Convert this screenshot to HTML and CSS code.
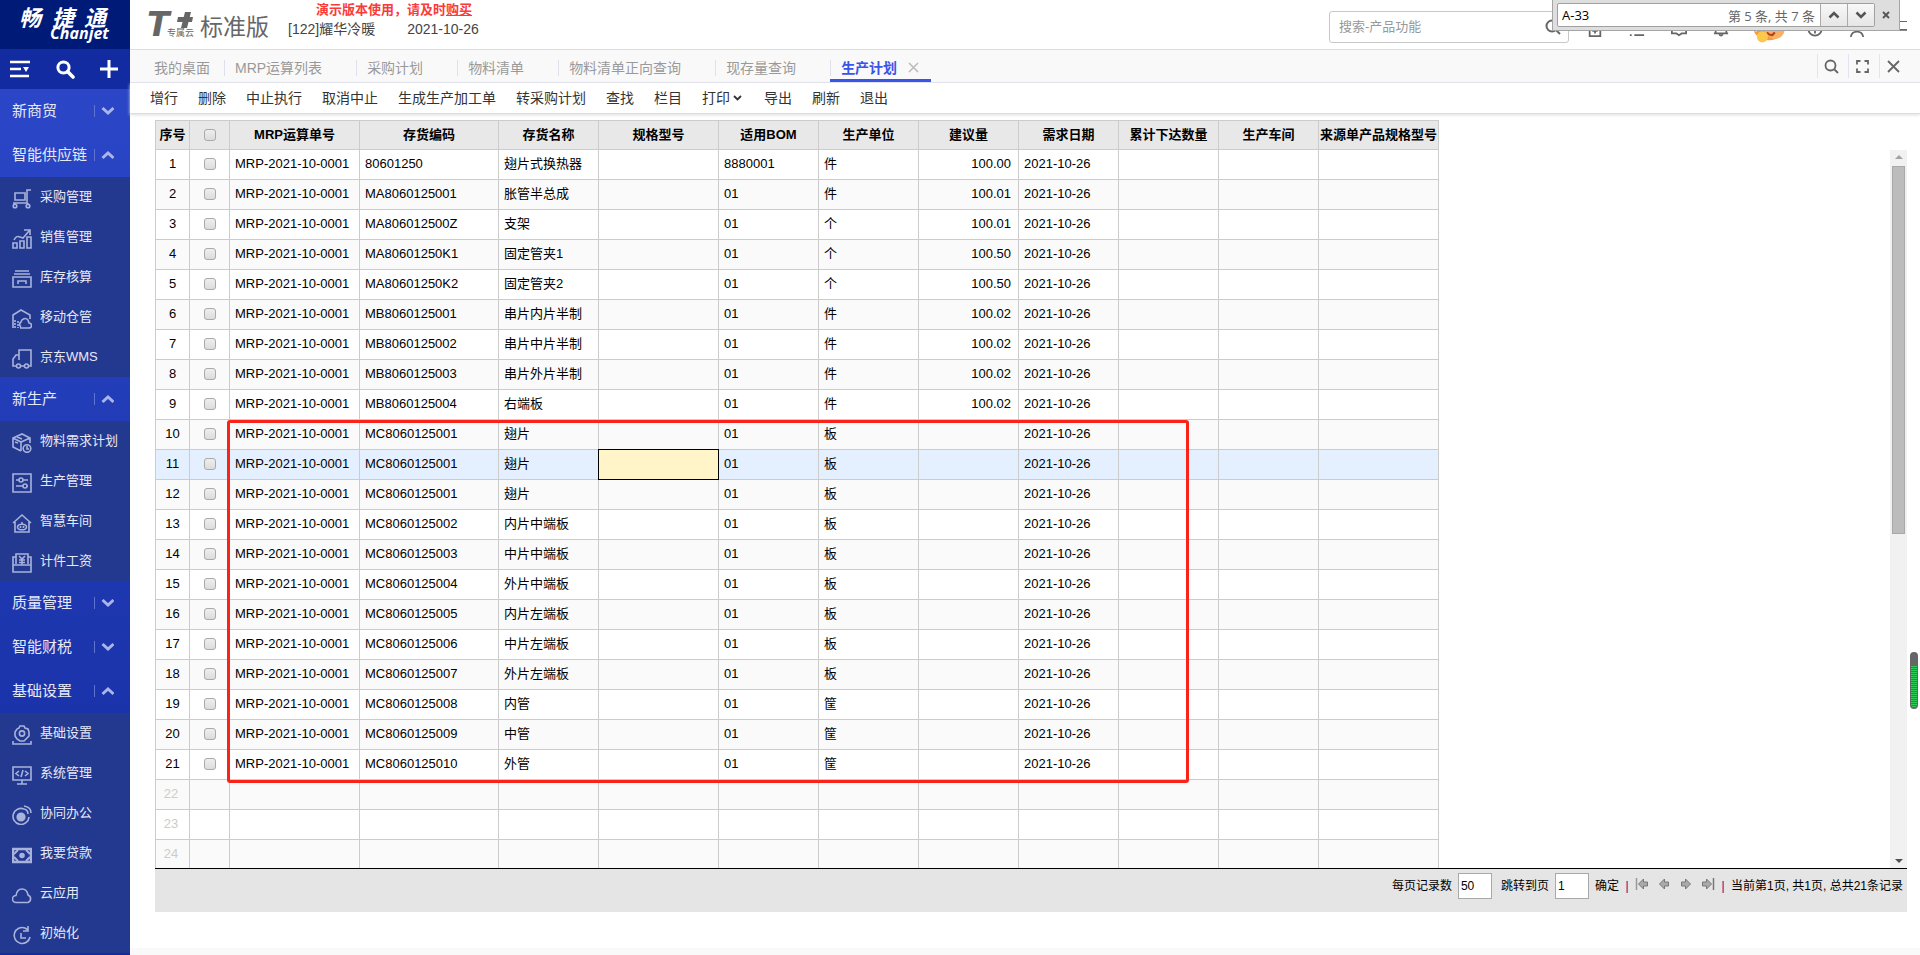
FILE: index.html
```html
<!DOCTYPE html>
<html lang="zh-CN">
<head>
<meta charset="utf-8">
<title>生产计划</title>
<link rel="stylesheet" href="styles.css">
</head>
<body>
<aside class="sidebar">
  <div class="brand">
    <svg class="brand-logo" width="130" height="49" viewBox="0 0 130 49" role="img" aria-label="畅捷通 Chanjet">
      <text class="brand-cn" x="19 52 84" y="26">畅捷通</text>
      <text class="brand-en" x="50" y="39">Chanjet</text>
    </svg>
  </div>
  <div class="quick">
    <button type="button" aria-label="菜单"><svg width="20" height="18" viewBox="0 0 20 18"><path d="M0 2h20M0 9h11M0 16h19" stroke="#fff" stroke-width="2.6" fill="none"/><path d="M13 7h6l-3 5z" fill="#fff"/></svg></button>
    <button type="button" aria-label="搜索"><svg width="19" height="19" viewBox="0 0 19 19"><circle cx="7.5" cy="7.5" r="5.6" stroke="#fff" stroke-width="3" fill="none"/><path d="M11.5 11.5l5.500 5.500" stroke="#fff" stroke-width="3.6" stroke-linecap="round"/></svg></button>
    <button type="button" aria-label="新增"><svg width="18" height="18" viewBox="0 0 18 18"><path d="M9 0v18M0 9h18" stroke="#fff" stroke-width="3"/></svg></button>
  </div>
  <nav class="menu">
    <button type="button" class="group">新商贸<svg class="chev" viewBox="0 0 20 12"><path d="M.5 0v12" class="bar"/><path d="M8.500 3l5.500 5 5.500-5"/></svg></button>
    <button type="button" class="group">智能供应链<svg class="chev" viewBox="0 0 20 12"><path d="M.5 0v12" class="bar"/><path d="M8.500 9l5.500-5 5.500 5"/></svg></button>
    <ul class="items">
      <li><a href="#"><svg viewBox="0 0 20 20"><path d="M3 4h10v7H3zM1 14h14V1h4M2 14l1 2M15 14l2 2"/><circle cx="3" cy="17" r="1.800"/><circle cx="16" cy="17" r="1.800"/></svg>采购管理</a></li>
      <li><a href="#"><svg viewBox="0 0 20 20"><path d="M1 14h4v5H1zM8 12h4v7H8zM15 8h4v11h-4zM2 11c2-4 4-4 6-3l3 1 6-7M12 1h6v5"/></svg>销售管理</a></li>
      <li><a href="#"><svg viewBox="0 0 20 20"><path d="M3 2h14M2 5h16M1 8h18v10H1zM6 15v-3h8v3"/></svg>库存核算</a></li>
      <li><a href="#"><svg viewBox="0 0 20 20"><path d="M1 19V6l8-5 9 5v4M9 18a3 3 0 0 1 0-5 4 4 0 0 1 7-2l1 3a2 2 0 0 1 0 5H8"/><path d="M3 11v8M6 12v7" stroke-dasharray="2 1"/></svg>移动仓管</a></li>
      <li><a href="#"><svg viewBox="0 0 20 20"><path d="M4 17H1v-7l3-4h3v5M7 6V1h12v16h-2M9 17h3"/><circle cx="6.500" cy="17" r="2"/><circle cx="14.500" cy="17" r="2"/></svg>京东WMS</a></li>
    </ul>
    <button type="button" class="group">新生产<svg class="chev" viewBox="0 0 20 12"><path d="M.5 0v12" class="bar"/><path d="M8.500 9l5.500-5 5.500 5"/></svg></button>
    <ul class="items">
      <li><a href="#"><svg viewBox="0 0 20 20"><path d="M9 18l-8-4V5l9-4 8 4v5M1 5l8 4 9-4M9 9v9M3 9l3 1M5 4l5 2"/><circle cx="15" cy="15.500" r="3.800"/><path d="M15 13v3h2"/></svg>物料需求计划</a></li>
      <li><a href="#"><svg viewBox="0 0 20 20"><path d="M1 1h18v18H1zM4 7h3M11 7h5M4 13h7M15 13h1"/><circle cx="9" cy="7" r="2"/><circle cx="13" cy="13" r="2"/></svg>生产管理</a></li>
      <li><a href="#"><svg viewBox="0 0 20 20"><path d="M1 10l9-8 9 8M3 9v10h14V9"/><path d="M10 9v2"/><ellipse cx="10" cy="14" rx="4.500" ry="2.800"/><path d="M8.500 13v2M11.500 13v2"/></svg>智慧车间</a></li>
      <li><a href="#"><svg viewBox="0 0 20 20"><path d="M4 11V1h12v10M4 4H1v15h18V4h-3M1 12h18M7 3l3 3 3-3M10 6v6M7 7h6M7 9.500h6"/></svg>计件工资</a></li>
    </ul>
    <button type="button" class="group">质量管理<svg class="chev" viewBox="0 0 20 12"><path d="M.5 0v12" class="bar"/><path d="M8.500 3l5.500 5 5.500-5"/></svg></button>
    <button type="button" class="group">智能财税<svg class="chev" viewBox="0 0 20 12"><path d="M.5 0v12" class="bar"/><path d="M8.500 3l5.500 5 5.500-5"/></svg></button>
    <button type="button" class="group">基础设置<svg class="chev" viewBox="0 0 20 12"><path d="M.5 0v12" class="bar"/><path d="M8.500 9l5.500-5 5.500 5"/></svg></button>
    <ul class="items">
      <li><a href="#"><svg viewBox="0 0 20 20"><path d="M1 16v3h18v-3M8 1h4l1 2 3 1 1 3v4l-3 3-2 2H8l-3-2-2-3V7l2-3 2-1z"/><circle cx="10" cy="8.500" r="2.600"/></svg>基础设置</a></li>
      <li><a href="#"><svg viewBox="0 0 20 20"><path d="M1 2h18v13H1zM10 15v4M5 19h10M7 6L4 8.500 7 11M13 6l3 2.500-3 2.500M11 5l-2 7"/></svg>系统管理</a></li>
      <li><a href="#"><svg viewBox="0 0 20 20"><path d="M12 4a8 8 0 1 0 5 8M12 1q7 1 7 7M12 4q4 1 4 5"/><circle cx="9" cy="12" r="3.800" fill="#a9b2db"/></svg>协同办公</a></li>
      <li><a href="#"><svg viewBox="0 0 20 20"><path d="M1 4h18v13H1z" stroke-width="2.500"/><path d="M6 5L2 9M14 5l4 4M6 16l-4-4M14 16l4-4" stroke-width="2"/><circle cx="10" cy="10.500" r="2" fill="#a9b2db"/></svg>我要贷款</a></li>
      <li><a href="#"><svg viewBox="0 0 20 20"><path d="M4 17.500a3.500 3.500 0 0 1 0-7Q5 4 10 4t6 6a4 4 0 0 1 0 7.500z"/></svg>云应用</a></li>
      <li><a href="#"><svg viewBox="0 0 20 20"><path d="M16 5L13 3a8 8 0 1 0 5 9M16 1v5h-5M9 8v5h5"/></svg>初始化</a></li>
    </ul>
  </nav>
</aside>

<main class="main">
  <header class="header">
    <svg class="product" width="130" height="40" viewBox="0 0 130 40" role="img" aria-label="T+ 专属云 标准版">
      <text class="product-t" x="3" y="31">T</text>
      <path d="M41 7h6l-4 16h-6zM34 12h15l-1 5H33z"/>
      <text class="product-sub" x="23" y="31">专属云</text>
      <text class="product-name" x="56" y="30">标准版</text>
    </svg>
    <div class="account">
      <p class="trial">演示版本使用，请及时<a href="#">购买</a></p>
      <p class="org"><span>[122]耀华冷暖</span><time datetime="2021-10-26">2021-10-26</time></p>
    </div>
    <div class="search">
      <input type="text" placeholder="搜索-产品功能" aria-label="搜索产品功能">
      <button type="button" aria-label="搜索"><svg width="18" height="18" viewBox="0 0 18 18"><circle cx="8" cy="8" r="5.500"/><path d="M12 12l4 4"/></svg></button>
    </div>
    <div class="actions">
      <button type="button" aria-label="保存"><svg viewBox="0 0 18 18"><path d="M3 3h12v14H3zM9 7v7M6 11h6"/></svg></button>
      <button type="button" aria-label="列表"><svg viewBox="0 0 18 18"><path d="M1 3h2M6 3h11M1 9h2M6 9h11M1 16h2M6 16h11"/></svg></button>
      <button type="button" aria-label="消息"><svg viewBox="0 0 18 18"><path d="M1 2h16v12h-5l-3 2-3-2H1z"/></svg></button>
      <button type="button" aria-label="通知"><svg viewBox="0 0 18 18"><path d="M1 14h16M3 14V7a6 6 0 0 1 12 0v7M7 15q2 3 4 0"/></svg></button>
      <button type="button" class="avatar" aria-label="助手"><svg class="face" viewBox="0 0 34 30"><ellipse cx="18" cy="14" rx="14" ry="11" fill="#f59a3c"/><ellipse cx="23" cy="15" rx="9" ry="9" fill="#f8b064"/><path d="M3 12l3 6 3-2z" fill="#ddd"/><path d="M16 18q4 5 7 0" stroke="#b3431f" stroke-width="2" fill="none"/><circle cx="12" cy="22" r="5" fill="#fbc84b"/></svg></button>
      <button type="button" aria-label="帮助"><svg viewBox="0 0 18 18"><circle cx="9" cy="9" r="7.500"/><path d="M9 11v3M7 6q2-3 4 0l-2 3"/></svg></button>
      <button type="button" aria-label="用户"><svg viewBox="0 0 18 18"><circle cx="9" cy="6" r="4"/><path d="M2 18q1-6 7-6t7 6"/></svg></button>
      <button type="button" aria-label="更多"><svg viewBox="0 0 18 18"><path d="M2 0h16M2 10h16"/></svg></button>
    </div>
  </header>

  <div class="tabbar">
    <nav class="tabs">
      <a href="#" class="tab home">我的桌面</a>
      <a href="#" class="tab">MRP运算列表</a>
      <a href="#" class="tab">采购计划</a>
      <a href="#" class="tab">物料清单</a>
      <a href="#" class="tab">物料清单正向查询</a>
      <a href="#" class="tab">现存量查询</a>
      <a href="#" class="tab active" aria-current="page">生产计划<svg width="11" height="11" viewBox="0 0 11 11"><path d="M1 1l9 9M10 1l-9 9" stroke="#bbb" stroke-width="1.500"/></svg></a>
    </nav>
    <div class="tabtools">
      <button type="button" aria-label="搜索"><svg width="15" height="15" viewBox="0 0 15 15"><circle cx="6.500" cy="6.500" r="5"/><path d="M10.500 10.500l3.500 3.500"/></svg></button>
      <button type="button" aria-label="全屏"><svg width="15" height="15" viewBox="0 0 15 15"><path d="M2 5.500V2h3.500M9.500 2H13v3.500M13 9.500V13H9.500M5.500 13H2V9.500"/></svg></button>
      <button type="button" aria-label="关闭"><svg width="15" height="15" viewBox="0 0 15 15"><path d="M2 2l11 11M13 2L2 13"/></svg></button>
    </div>
  </div>

  <div class="toolbar">
    <button type="button">增行</button><button type="button">删除</button><button type="button">中止执行</button><button type="button">取消中止</button><button type="button">生成生产加工单</button><button type="button">转采购计划</button><button type="button">查找</button><button type="button">栏目</button><button type="button">打印<svg width="14" height="10" viewBox="0 0 14 10"><path d="M4 3l3.500 3.500L11 3" fill="none" stroke="#333" stroke-width="1.800"/></svg></button><button type="button">导出</button><button type="button">刷新</button><button type="button">退出</button>
  </div>

  <section class="content">
    <div class="grid">
      <div class="sheet">
        <table class="plan">
          <colgroup><col class="w-no"><col class="w-check"><col class="w-order"><col class="w-code"><col class="w-std"><col class="w-wide"><col class="w-std"><col class="w-std"><col class="w-std"><col class="w-std"><col class="w-std"><col class="w-std"><col class="w-wide"></colgroup>
          <thead><tr><th>序号</th><th><input type="checkbox" aria-label="全选"></th><th>MRP运算单号</th><th>存货编码</th><th>存货名称</th><th>规格型号</th><th>适用BOM</th><th>生产单位</th><th>建议量</th><th>需求日期</th><th>累计下达数量</th><th>生产车间</th><th>来源单产品规格型号</th></tr></thead>
          <tbody id="rows"></tbody>
        </table>
        <div class="highlight"></div>
      </div>
      <div class="scrollbar" aria-hidden="true"><span class="arrow up"></span><span class="thumb"></span><span class="arrow down"></span></div>
    </div>
    <footer class="pager">
      <label for="size">每页记录数</label><input id="size" type="text" value="50">
      <label for="jump">跳转到页</label><input id="jump" type="text" value="1">
      <button type="button">确定</button><span class="sep">|</span>
      <div class="pages">
        <button type="button" aria-label="首页"><svg viewBox="0 0 14 12"><path d="M1.500 0v12" stroke="#999" stroke-width="1.500"/><path d="M3.500 6l5-5v3h4v4h-4v3z"/></svg></button>
        <button type="button" aria-label="上一页"><svg viewBox="0 0 14 12"><path d="M2.500 6l5-5v3h4v4h-4v3z"/></svg></button>
        <button type="button" aria-label="下一页"><svg viewBox="0 0 14 12"><path d="M11.500 6l-5-5v3h-4v4h4v3z"/></svg></button>
        <button type="button" aria-label="末页"><svg viewBox="0 0 14 12"><path d="M12.500 0v12" stroke="#777" stroke-width="1.500"/><path d="M10.500 6l-5-5v3h-4v4h4v3z"/></svg></button>
      </div>
      <span class="sep">|</span><span class="total">当前第1页, 共1页, 总共21条记录</span>
    </footer>
  </section>
</main>

<form class="findbar">
  <div class="findbox">
    <input type="text" value="A-33" aria-label="在页面中查找">
    <span class="count">第 5 条, 共 7 条</span>
    <button type="button" aria-label="上一个"><svg width="12" height="8" viewBox="0 0 12 8"><path d="M1.500 6.500L6 2l4.500 4.500"/></svg></button>
    <button type="button" aria-label="下一个"><svg width="12" height="8" viewBox="0 0 12 8"><path d="M1.500 1.500L6 6l4.500-4.500"/></svg></button>
  </div>
  <button type="button" class="close" aria-label="关闭"><svg width="8" height="8" viewBox="0 0 8 8"><path d="M1 1l6 6M7 1L1 7"/></svg></button>
</form>
<div class="meter" aria-hidden="true"></div>
<script src="script.js"></script>
</body>
</html>
```
FILE: styles.css
```css
* { box-sizing: border-box; }
body {
  margin: 0;
  height: 100vh;
  display: flex;
  overflow: hidden;
  background: #fff;
  color: #000;
  font: 13px/20px "Liberation Sans", "Noto Sans CJK SC", sans-serif;
}
button, input { font: inherit; color: inherit; margin: 0; }
button { padding: 0; border: 0; background: none; }
a { color: inherit; text-decoration: none; }
p, ul { margin: 0; padding: 0; list-style: none; }
svg { display: block; flex: none; }

/* Sidebar */
.sidebar {
  width: 130px;
  flex: none;
  overflow: hidden;
  color: #e6e9f7;
  background: linear-gradient(#2d49cb, #142c9f);
}
.brand { height: 49px; background: #001a78; }
.brand-cn { font: italic bold 22px "Noto Sans CJK SC", sans-serif; fill: #fff; }
.brand-en { font: italic bold 16px "Open Sans", sans-serif; fill: #fff; }
.quick {
  height: 40px;
  padding: 0 12px 0 10px;
  display: flex;
  align-items: center;
  justify-content: space-between;
  background: #132ba0;
}
.group {
  width: 100%;
  height: 44px;
  padding: 0 16px 0 12px;
  display: flex;
  align-items: center;
  justify-content: space-between;
  font-size: 15px;
}
.chev { width: 20px; height: 12px; fill: none; stroke: #aab5e8; stroke-width: 3; }
.chev .bar { stroke: #5f74d2; stroke-width: 1; }
.items { background: #23388f; }
.items a {
  height: 40px;
  padding: 0 12px;
  display: flex;
  align-items: center;
  gap: 8px;
  white-space: nowrap;
}
.items svg { width: 20px; height: 20px; margin-top: 3px; fill: none; stroke: #a9b2db; stroke-width: 1.600; }

/* Header */
.main { flex: 1; min-width: 0; display: flex; flex-direction: column; }
.header {
  height: 50px;
  flex: none;
  padding-left: 14px;
  display: flex;
  align-items: center;
  border-bottom: 1px solid #ddd;
}
.product { fill: #666; }
.product-t { font: italic bold 33px "DejaVu Sans", sans-serif; }
.product-sub { font: 9px "Noto Sans CJK SC", sans-serif; }
.product-name { font: 23px "Noto Sans CJK SC", sans-serif; }
.account { flex: 1; padding-left: 14px; align-self: flex-start; white-space: nowrap; }
.trial { padding-left: 28px; color: #fb3a3a; font-weight: bold; }
.trial a { text-decoration: underline; }
.org { display: flex; gap: 32px; font-size: 14px; line-height: 18px; color: #444; }
.search {
  width: 240px;
  height: 32px;
  margin: 4px 5px 0 0;
  display: flex;
  align-items: center;
  border: 1px solid #c8c8c8;
  border-radius: 3px;
}
.search input { flex: 1; min-width: 0; border: 0; padding: 0 9px; background: none; outline: 0; }
.search input::placeholder { color: #999; opacity: 1; }
.search button { width: 24px; }
.search svg, .actions svg { fill: none; stroke: #666; stroke-width: 2; }
.actions { display: flex; padding-top: 8px; }
.actions button { width: 42px; display: flex; justify-content: center; align-items: center; }
.actions svg { width: 16px; height: 16px; }
.actions .avatar { width: 52px; }
.actions .face { width: 38px; height: 34px; stroke: none; }

/* Tabs */
.tabbar {
  height: 33px;
  flex: none;
  display: flex;
  justify-content: space-between;
  background: #f9f9f9;
  border-bottom: 1px solid #e2e4ef;
}
.tabs { display: flex; padding-left: 13px; font-size: 14px; color: #999; }
.tab {
  position: relative;
  padding: 3px 34px 0 11px;
  display: flex;
  align-items: center;
  white-space: nowrap;
}
.tab + .tab::before {
  content: "";
  position: absolute;
  left: 0;
  top: 10px;
  height: 16px;
  border-left: 1px solid #dfe0ee;
}
.tab.home { padding-right: 14px; }
.tab.active {
  padding: 6px 12px 0 11px;
  gap: 11px;
  color: #3954e8;
  font-weight: bold;
  border-bottom: 3px solid #3954e8;
}
.tabtools { display: flex; align-items: center; padding-right: 10px; }
.tabtools button {
  width: 31px;
  height: 24px;
  padding-right: 3px;
  display: flex;
  align-items: center;
  justify-content: center;
  border-left: 1px solid #e2e4ef;
}
.tabtools svg { fill: none; stroke: #666; stroke-width: 1.800; }

/* Toolbar */
.toolbar {
  height: 31px;
  flex: none;
  padding-left: 20px;
  display: flex;
  align-items: center;
  gap: 20px;
  font-size: 14px;
  color: #333;
  border-bottom: 1px solid #ddd;
  box-shadow: 0 1px 3px #ddd;
}
.toolbar button { display: flex; align-items: center; white-space: nowrap; }

/* Grid */
.content {
  flex: 1;
  min-height: 0;
  margin-bottom: 7px;
  padding: 6px 13px 36px 25px;
  display: flex;
  flex-direction: column;
  box-shadow: 0 7px #f9f9f9;
}
.grid {
  flex: 1;
  min-height: 0;
  overflow: hidden;
  display: flex;
  justify-content: space-between;
  border-bottom: 1px solid #000;
}
.sheet { position: relative; flex: none; }
.plan { width: 1284px; table-layout: fixed; border-collapse: collapse; }
.w-no { width: 34px; }
.w-check { width: 40px; }
.w-order { width: 130px; }
.w-code { width: 139px; }
.w-std { width: 100px; }
.w-wide { width: 120px; }
.plan th, .plan td { height: 30px; padding: 0 5px 1px; border: 1px solid #ccc; white-space: nowrap; line-height: 18px; }
.plan th { height: 29px; padding: 0 0 1px; background: #e8e8e8; text-align: center; }
.plan tbody tr:nth-child(even) { background: #fafafa; }
.plan tbody tr.current { background: #e4f0ff; }
.plan td:nth-child(-n+2) { text-align: center; }
.plan td:nth-child(9) { text-align: right; padding-right: 7px; }
.plan .empty td { color: #ccc; padding-right: 8px; }
.plan td.cell-focus { background: #fff5c9; border: 1px double #000; }
.plan input {
  appearance: none;
  display: block;
  width: 12px;
  height: 12px;
  margin: 0 auto;
  border: 1px solid #aaa;
  border-radius: 3px;
  background: linear-gradient(#eee, #dcdcdc);
}
.highlight {
  position: absolute;
  left: 72px;
  top: 300px;
  width: 962px;
  height: 363px;
  border: 3px solid #f9231a;
  border-radius: 3px;
}
.scrollbar {
  width: 17px;
  margin-top: 30px;
  padding: 5px 2px;
  display: flex;
  flex-direction: column;
  align-items: center;
  background: #f1f1f1;
}
.arrow { border: 4px solid transparent; }
.arrow.up { border-top: 0; border-bottom-color: #a3a3a3; }
.arrow.down { border-bottom: 0; border-top-color: #505050; margin-top: auto; }
.thumb { width: 13px; height: 52%; margin-top: 7px; background: #bcbcbc; border: 1px solid #a8a8a8; }

/* Pager */
.pager {
  height: 43px;
  flex: none;
  padding: 4px 4px 0 0;
  display: flex;
  justify-content: flex-end;
  align-items: flex-start;
  font-size: 12px;
  line-height: 26px;
  background: #e5e5e5;
}
.pager input { width: 34px; height: 26px; margin: 0 9px 0 6px; padding: 0 2px; border: 1px solid #a9a9a9; background: #fff; }
.pager #jump { margin-right: 6px; }
.sep { width: 16px; text-align: center; color: #707; }
.pages { height: 22px; display: flex; align-items: center; gap: 8px; }
.pages svg { width: 14px; height: 12px; fill: #aaa; stroke: #777; stroke-width: 1; }

/* Browser find bar */
.findbar {
  position: absolute;
  top: 0;
  right: 20px;
  width: 348px;
  height: 31px;
  padding: 3px 4px;
  display: flex;
  justify-content: space-between;
  background: #dedede;
  border: 1px solid #a5a5a5;
  border-top: 0;
}
.findbox { width: 318px; height: 24px; display: flex; align-items: center; border: 1px solid #a0a0a0; border-radius: 2px; background: #fff; }
.findbox input { flex: 1; min-width: 0; border: 0; padding: 0 4px; background: none; outline: 0; font: 13px "Open Sans", sans-serif; }
.count { padding-right: 5px; color: #666; font: 13px "Open Sans", "Noto Sans CJK SC", sans-serif; }
.findbox button {
  width: 27px;
  height: 22px;
  display: flex;
  align-items: center;
  justify-content: center;
  border-left: 1px solid #aaa;
  background: linear-gradient(#f8f8f8, #e6e6e6);
}
.findbar svg { fill: none; stroke: #555; stroke-width: 2.500; }
.close { width: 18px; display: flex; align-items: center; justify-content: center; }
.findbar .close svg { stroke-width: 1.800; }

/* Level meter on the window edge */
.meter {
  position: absolute;
  right: 2px;
  top: 652px;
  width: 8px;
  height: 57px;
  padding: 14px 1px 2px;
  border-radius: 4px;
  background: repeating-linear-gradient(#2ecc57 0 1px, #666 1px 2px) content-box, #666;
}
```
FILE: script.js
```js
const DATE = '2021-10-26';
const ORDER = 'MRP-2021-10-0001';
const PLANS = [
  ['80601250', '翅片式换热器', '8880001', '件', '100.00'],
  ['MA8060125001', '胀管半总成', '01', '件', '100.01'],
  ['MA806012500Z', '支架', '01', '个', '100.01'],
  ['MA80601250K1', '固定管夹1', '01', '个', '100.50'],
  ['MA80601250K2', '固定管夹2', '01', '个', '100.50'],
  ['MB8060125001', '串片内片半制', '01', '件', '100.02'],
  ['MB8060125002', '串片中片半制', '01', '件', '100.02'],
  ['MB8060125003', '串片外片半制', '01', '件', '100.02'],
  ['MB8060125004', '右端板', '01', '件', '100.02'],
  ['MC8060125001', '翅片', '01', '板', ''],
  ['MC8060125001', '翅片', '01', '板', ''],
  ['MC8060125001', '翅片', '01', '板', ''],
  ['MC8060125002', '内片中端板', '01', '板', ''],
  ['MC8060125003', '中片中端板', '01', '板', ''],
  ['MC8060125004', '外片中端板', '01', '板', ''],
  ['MC8060125005', '内片左端板', '01', '板', ''],
  ['MC8060125006', '中片左端板', '01', '板', ''],
  ['MC8060125007', '外片左端板', '01', '板', ''],
  ['MC8060125008', '内管', '01', '筐', ''],
  ['MC8060125009', '中管', '01', '筐', ''],
  ['MC8060125010', '外管', '01', '筐', '']
];
const ROWS = 24;
const CURRENT = 11;

const body = document.getElementById('rows');
for (let n = 1; n <= ROWS; n++) {
  const tr = body.insertRow();
  const plan = PLANS[n - 1];
  tr.insertCell().textContent = n;
  const check = tr.insertCell();
  if (plan) {
    const box = document.createElement('input');
    box.type = 'checkbox';
    box.setAttribute('aria-label', '选择第' + n + '行');
    check.append(box);
  } else {
    tr.className = 'empty';
  }
  const [code, name, bom, unit, qty] = plan || ['', '', '', '', ''];
  const cells = [plan ? ORDER : '', code, name, '', bom, unit, qty, plan ? DATE : '', '', '', ''];
  cells.forEach(text => { tr.insertCell().textContent = text; });
  if (n === CURRENT) {
    tr.className = 'current';
    tr.cells[5].className = 'cell-focus';
  }
}
```
